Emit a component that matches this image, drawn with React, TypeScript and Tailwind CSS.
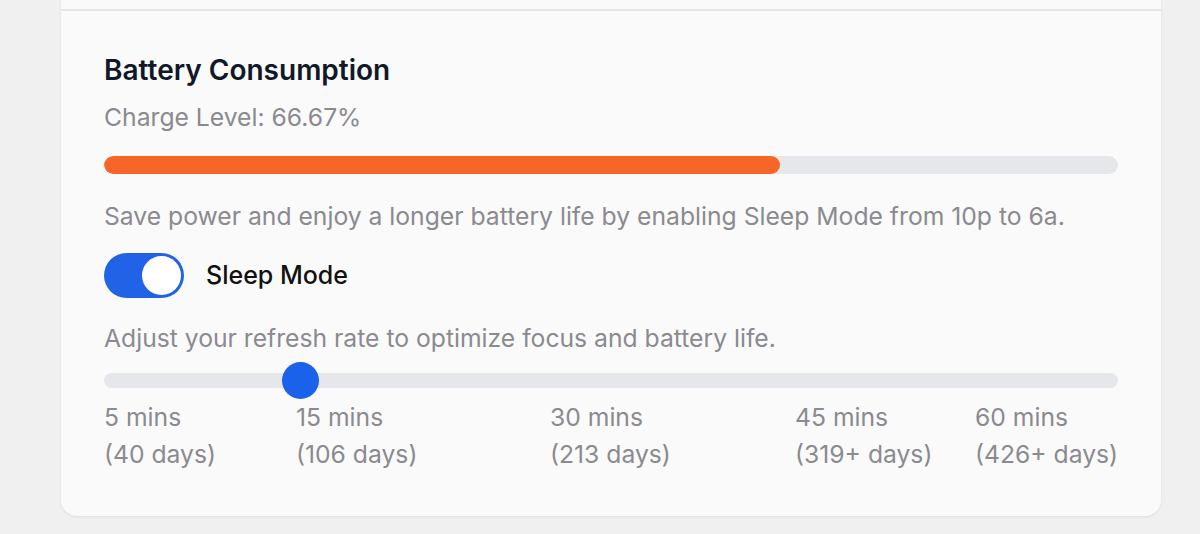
import { useState } from 'react';

const stops = [
  { mins: '5 mins', days: '(40 days)' },
  { mins: '15 mins', days: '(106 days)' },
  { mins: '30 mins', days: '(213 days)' },
  { mins: '45 mins', days: '(319+ days)' },
  { mins: '60 mins', days: '(426+ days)' },
];

export default function App() {
  const [sleep, setSleep] = useState(true);
  const charge = 66.67;
  const value = 15;
  const pct = (value - 5) / (60 - 5);

  return (
    <div className="h-[534px] w-[1200px] bg-[#f0f0f0] pl-[61px] pr-[39px] pb-[18px]" style={{ fontFamily: 'Inter, "Noto Sans", sans-serif' }}>
      <div className="h-full rounded-b-2xl bg-[#fafafa] shadow-[0_1px_3px_rgba(0,0,0,0.08)] flex flex-col">
        <div className="h-[9px] shrink-0" />
        <div className="border-t-2 border-[#e6e6e6] px-[43px] pt-[41px]">
          {/* Header */}
          <h2 className="text-[28px] leading-[36px] font-semibold text-[#111827]">Battery Consumption</h2>
          <p className="mt-[13px] text-[24.7px] leading-[32px] text-[#8a8a8f]">Charge Level: {charge}%</p>

          {/* Charge bar */}
          <div className="mt-[23px] h-[18px] rounded-full bg-[#e6e7ea] overflow-hidden">
            <div className="h-full rounded-full bg-[#f76628]" style={{ width: `${charge}%` }} />
          </div>

          <p className="mt-[26px] text-[24.7px] leading-[32px] text-[#8a8a8f] whitespace-nowrap">
            Save power and enjoy a longer battery life by enabling Sleep Mode from 10p to 6a.
          </p>

          {/* Sleep toggle */}
          <div className="mt-[21px] flex items-center gap-[22px]">
            <button
              onClick={() => setSleep(!sleep)}
              className={`h-[45px] w-[80px] rounded-full p-[3px] flex ${sleep ? 'bg-[#2163e6] justify-end' : 'bg-[#d4d4d8] justify-start'}`}
            >
              <span className="h-[39px] w-[39px] rounded-full bg-white" />
            </button>
            <span className="text-[25px] font-medium text-[#111111]">Sleep Mode</span>
          </div>

          <p className="mt-[24px] text-[24.7px] leading-[32px] text-[#8a8a8f]">
            Adjust your refresh rate to optimize focus and battery life.
          </p>

          {/* Refresh rate slider */}
          <div className="mt-[8px] relative h-[37px] flex items-center">
            <div className="h-[15px] w-full rounded-full bg-[#e6e7ea]" />
            <div
              className="absolute top-0 h-[37px] w-[37px] rounded-full bg-[#1a62ea]"
              style={{ left: `calc(${pct} * (100% - 37px))` }}
            />
          </div>

          <div className="grid grid-cols-[192px_254px_245px_180px_1fr] text-[24.7px] leading-[37px] text-[#8a8a8f] whitespace-nowrap">
            {stops.map((s) => (
              <div key={s.mins}>
                <div>{s.mins}</div>
                <div>{s.days}</div>
              </div>
            ))}
          </div>
        </div>
      </div>
    </div>
  );
}
